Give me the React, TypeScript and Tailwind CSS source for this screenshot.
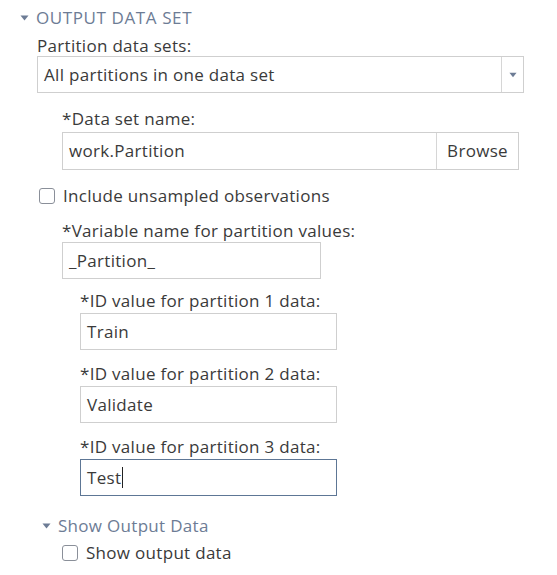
import React from 'react';

const font = { fontFamily: '"Open Sans", Lato, sans-serif' };

function Caret({ className }: { className?: string }) {
  return (
    <svg width="9" height="6" viewBox="0 0 9 6" className={className}>
      <path d="M0.5 0.5 L8.5 0.5 L4.5 5.5 Z" fill="currentColor" />
    </svg>
  );
}

function Checkbox() {
  return <span className="inline-block w-[16px] h-[16px] rounded-[3px] border border-[#8a8f99] bg-white shrink-0" />;
}

function Field({ label, value, focused }: { label: string; value: string; focused?: boolean }) {
  return (
    <div className="flex flex-col">
      <div className="h-[20px] leading-[20px] text-[17px] text-[#3a3a3a]">{label}</div>
      <div
        className={`w-[257px] h-[37px] mt-[2px] flex items-center px-[6px] bg-white border ${
          focused ? 'border-[#5d7695]' : 'border-[#cfcfcf]'
        } text-[17px] text-[#3a3a3a]`}
      >
        {value}
        {focused && <span className="inline-block w-[1px] h-[21px] bg-[#222] ml-[1px]" />}
      </div>
    </div>
  );
}

export default function App() {
  return (
    <div className="w-[557px] h-[575px] bg-white pt-[8px] pl-[20px] tracking-[0.3px]" style={font}>
      <div className="flex items-center h-[20px] gap-[7px]">
        <Caret className="text-[#6d7c95]" />
        <span className="text-[17px] text-[#6d7c95] tracking-[0.6px]">OUTPUT DATA SET</span>
      </div>

      <div className="pl-[17px] mt-[8px]">
        <div className="h-[20px] leading-[20px] text-[17px] text-[#3a3a3a]">Partition data sets:</div>
        <div className="w-[487px] h-[37px] flex border border-[#cfcfcf] bg-white">
          <div className="flex-1 flex items-center px-[6px] text-[17px] text-[#3a3a3a]">All partitions in one data set</div>
          <div className="w-[22px] border-l border-[#d6d6d6] flex items-center justify-center">
            <Caret className="text-[#6d7c95] w-[8px]" />
          </div>
        </div>

        <div className="pl-[25px] mt-[16px]">
          <div className="h-[20px] leading-[20px] text-[17px] text-[#3a3a3a]">*Data set name:</div>
          <div className="w-[457px] h-[38px] mt-[3px] flex border border-[#cfcfcf] bg-white text-[17px] text-[#3a3a3a]">
            <div className="flex-1 flex items-center px-[6px]">work.Partition</div>
            <div className="w-[82px] border-l border-[#d6d6d6] flex items-center justify-center">Browse</div>
          </div>
        </div>

        <div className="flex items-center gap-[8px] h-[20px] mt-[16px] pl-[2px]">
          <Checkbox />
          <span className="text-[17px] text-[#3a3a3a]">Include unsampled observations</span>
        </div>

        <div className="pl-[25px] mt-[15px]">
          <div className="h-[20px] leading-[20px] text-[17px] text-[#3a3a3a]">*Variable name for partition values:</div>
          <div className="w-[259px] h-[37px] mt-[1px] flex items-center px-[6px] border border-[#cfcfcf] bg-white text-[17px] text-[#3a3a3a]">
            _Partition_
          </div>

          <div className="pl-[18px] mt-[12px] flex flex-col gap-[14px]">
            <Field label="*ID value for partition 1 data:" value="Train" />
            <Field label="*ID value for partition 2 data:" value="Validate" />
            <Field label="*ID value for partition 3 data:" value="Test" focused />
          </div>
        </div>

        <div className="mt-[20px] pl-[5px] flex items-center gap-[7px] h-[20px]">
          <Caret className="text-[#6d7c95]" />
          <span className="text-[17px] text-[#6d7c95]">Show Output Data</span>
        </div>
        <div className="mt-[7px] pl-[25px] flex items-center gap-[8px] h-[20px]">
          <Checkbox />
          <span className="text-[17px] text-[#3a3a3a]">Show output data</span>
        </div>
      </div>
    </div>
  );
}
